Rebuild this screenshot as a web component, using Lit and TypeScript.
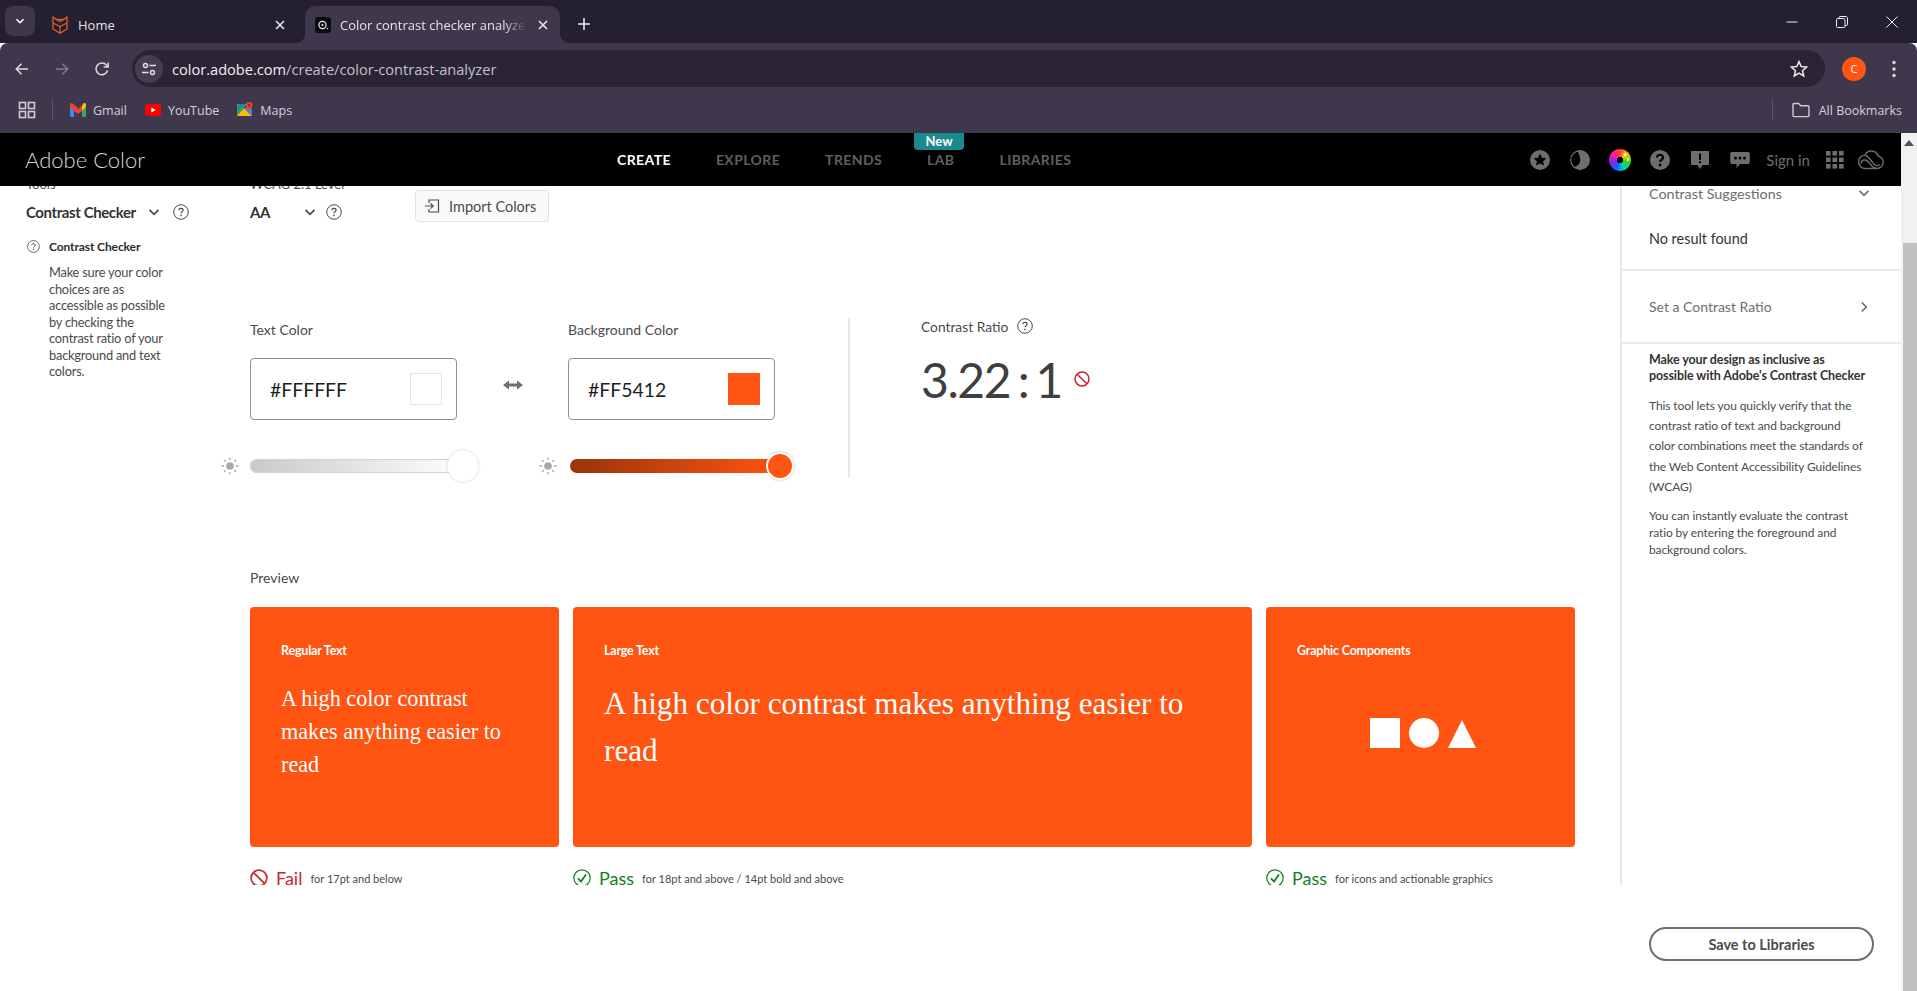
import {LitElement, css, html, svg} from 'lit';
import {customElement} from 'lit/decorators.js';

const helpIcon = (size = 16) => html`<svg class="help" width=${size} height=${size} viewBox="0 0 16 16">
  <circle cx="8" cy="8" r="7.3" fill="none" stroke="#4b4b4b" stroke-width="1"/>
  <path d="M5.9 6.2c0-1.2 1-1.9 2.1-1.9s2.1.7 2.1 1.8c0 1.6-2.1 1.6-2.1 3.2" fill="none" stroke="#4b4b4b" stroke-width="1.2"/>
  <circle cx="8" cy="11.4" r=".8" fill="#4b4b4b"/>
</svg>`;

const blockIcon = (size = 16) => html`<svg width=${size} height=${size} viewBox="0 0 16 16">
  <circle cx="8" cy="8" r="7" fill="none" stroke="#c9252d" stroke-width="1.5"/>
  <path d="M3.2 3.2l9.6 9.6" stroke="#c9252d" stroke-width="1.5"/>
</svg>`;

const checkIcon = (size = 18) => html`<svg width=${size} height=${size} viewBox="0 0 18 18">
  <circle cx="9" cy="9" r="8.2" fill="none" stroke="#128020" stroke-width="1.2"/>
  <path d="M5 9.4l3 3.2 5-7" fill="none" stroke="#128020" stroke-width="1.8"/>
</svg>`;

const chevronDown = (color = '#4b4b4b') => html`<svg width="12" height="12" viewBox="0 0 12 12">
  <path d="M1.5 3.8L6 8.3l4.5-4.5" fill="none" stroke=${color} stroke-width="1.7"/>
</svg>`;

const sunIcon = () => html`<svg width="18" height="18" viewBox="0 0 16 16">
  <circle cx="8" cy="8" r="3.4" fill="#a8a8a8"/>
  <path d="M8 .5v2.200M8 13.300v2.200M.5 8h2.200M13.300 8h2.200M2.700 2.700l1.500 1.500M11.800 11.800l1.500 1.500M2.700 13.300l1.500-1.500M11.800 4.200l1.500-1.500" stroke="#a8a8a8" stroke-width="1.200"/>
</svg>`;

const closeIcon = () => html`<svg width="16" height="16" viewBox="0 0 16 16">
  <path d="M4 4l8 8M12 4l-8 8" stroke="#e8e6ec" stroke-width="1.6"/>
</svg>`;

@customElement('app-root')
export class AppRoot extends LitElement {
  static styles = css`
    :host {
      display: block;
      width: 1917px;
      height: 991px;
      overflow: hidden;
      background: #fff;
      font-family: 'Lato', 'Open Sans', sans-serif;
      color: #2c2c2c;
    }
    svg {
      display: block;
      flex: none;
    }

    /* browser chrome */
    .tabstrip {
      height: 43px;
      display: flex;
      align-items: flex-end;
      background: #241f31;
      font-family: 'Open Sans', sans-serif;
      font-size: 13px;
      color: #e4e2e8;
    }
    .tab-menu {
      width: 30px;
      height: 30px;
      margin: 0 0 7px 5px;
      border-radius: 8px;
      background: #3f384c;
      display: flex;
      align-items: center;
      justify-content: center;
    }
    .tab {
      height: 37px;
      display: flex;
      align-items: center;
      box-sizing: border-box;
    }
    .tab.home {
      width: 250px;
      margin-left: 15px;
      padding: 0 12px 0 2px;
      gap: 10px;
    }
    .tab.active {
      width: 255px;
      margin-left: 5px;
      padding: 0 9px 0 10px;
      gap: 9px;
      background: #3f384c;
      border-radius: 10px 10px 0 0;
      position: relative;
    }
    .tab.active::before,
    .tab.active::after {
      content: '';
      position: absolute;
      bottom: 0;
      width: 10px;
      height: 10px;
    }
    .tab.active::before {
      left: -10px;
      background: radial-gradient(circle at 0 0, #241f31 10px, #3f384c 10.5px);
    }
    .tab.active::after {
      right: -10px;
      background: radial-gradient(circle at 100% 0, #241f31 10px, #3f384c 10.5px);
    }
    .tab-title {
      flex: 1;
      white-space: nowrap;
      overflow: hidden;
    }
    .tab.active .tab-title {
      -webkit-mask-image: linear-gradient(90deg, #000 88%, transparent);
      mask-image: linear-gradient(90deg, #000 88%, transparent);
    }
    .favicon {
      width: 16px;
      height: 16px;
      border-radius: 3px;
      background: #0b0b12;
    }
    .new-tab {
      margin: 0 0 11px 16px;
    }
    .window-controls {
      margin-left: auto;
      align-self: flex-start;
      display: flex;
    }
    .window-controls div {
      width: 50px;
      height: 43px;
      display: flex;
      align-items: center;
      justify-content: center;
    }

    .toolbar {
      height: 44px;
      box-sizing: border-box;
      padding-top: 7px;
      display: flex;
      align-items: center;
      background: #3f384c;
      border-radius: 8px 8px 0 0;
      padding-left: 2px;
    }
    .nav-btn {
      width: 40px;
      height: 37px;
      display: flex;
      align-items: center;
      justify-content: center;
    }
    .address {
      flex: 1;
      margin-left: 10px;
      height: 37px;
      border-radius: 19px;
      background: #2a2435;
      display: flex;
      align-items: center;
      padding: 0 16px 0 3px;
      font-family: 'Open Sans', sans-serif;
      font-size: 14.6px;
      color: #c4c0cb;
    }
    .site-info {
      width: 28px;
      height: 28px;
      border-radius: 50%;
      background: #453e52;
      display: flex;
      align-items: center;
      justify-content: center;
      margin-right: 9px;
    }
    .url b {
      font-weight: 400;
      color: #f1eff4;
    }
    .star {
      margin-left: auto;
    }
    .avatar {
      width: 24px;
      height: 24px;
      margin-left: 17px;
      border-radius: 50%;
      background: #ff5412;
      color: #fff;
      font-family: 'Open Sans', sans-serif;
      font-size: 11px;
      display: flex;
      align-items: center;
      justify-content: center;
    }
    .dots {
      margin: 0 15px 0 20px;
    }

    .bookmarks {
      height: 46px;
      display: flex;
      align-items: center;
      background: #3f384c;
      padding: 0 15px 0 17px;
      font-family: 'Open Sans', sans-serif;
      font-size: 12.5px;
      color: #d3d0d9;
    }
    .bm-sep {
      width: 1px;
      height: 20px;
      background: #5d566a;
    }
    .bm-sep.first {
      margin-left: 15px;
    }
    .bm-sep.last {
      margin-right: 10px;
    }
    .bm {
      display: flex;
      align-items: center;
      gap: 7px;
      margin-left: 18px;
    }
    .bm.first {
      margin-left: 17px;
    }
    .bm-all {
      margin-left: auto;
      display: flex;
      align-items: center;
      gap: 9px;
    }

    /* adobe page */
    .window {
      display: flex;
      height: 858px;
    }
    .page {
      width: 1901px;
      display: flex;
      flex-direction: column;
    }
    .scrollbar {
      width: 16px;
      background: #f1f1f1;
      display: flex;
      flex-direction: column;
    }
    .scroll-up {
      height: 110px;
      padding: 7px 0 0 3px;
      box-sizing: border-box;
    }
    .scroll-thumb {
      flex: 1;
      margin-left: 2px;
      background: #c1c1c1;
    }

    .nav {
      height: 53px;
      flex: none;
      background: #000;
      display: flex;
      align-items: center;
      position: relative;
      z-index: 1;
    }
    .brand {
      width: 592px;
      margin-left: 25px;
      font-size: 22px;
      font-weight: 300;
      color: #d8d8d8;
      flex: none;
    }
    .links {
      display: flex;
      gap: 45px;
      font-size: 14px;
      font-weight: 700;
      letter-spacing: 0.4px;
      color: #5f5f5f;
    }
    .links .on {
      color: #fff;
    }
    .lab {
      position: relative;
    }
    .badge {
      position: absolute;
      left: -13px;
      top: -18px;
      width: 50px;
      height: 17px;
      border-radius: 0 0 4px 4px;
      background: #1b8a8f;
      color: #fff;
      font-size: 13px;
      letter-spacing: 0;
      line-height: 16px;
      text-align: center;
    }
    .nav-right {
      margin-left: auto;
      display: flex;
      align-items: center;
      padding-right: 17px;
    }
    .nav-icon {
      width: 40px;
      display: flex;
      justify-content: center;
    }
    .wheel {
      width: 22px;
      height: 22px;
      border-radius: 50%;
      background: radial-gradient(circle, #000 0 3px, transparent 3.5px),
        radial-gradient(circle at 72% 24%, #fff 0 1.2px, transparent 1.6px),
        radial-gradient(circle at 86% 48%, #fff 0 1px, transparent 1.4px),
        conic-gradient(#ff3b30, #ffcc00, #34d800, #00d0c0, #1060ff, #9020e0, #ff20a0, #ff3b30);
    }
    .sign-in {
      margin-left: 6px;
      font-size: 15px;
      color: #6e6e6e;
    }
    .apps {
      margin-left: 16px;
    }
    .cc {
      margin-left: 14px;
    }

    .content {
      height: 699px;
      flex: none;
      overflow: hidden;
      display: grid;
      grid-template-columns: 250px 1370px 281px;
    }
    .small-label {
      height: 20px;
      line-height: 20px;
      font-size: 13px;
      margin-top: -12px;
      color: #4b4b4b;
    }
    .select {
      height: 24px;
      display: flex;
      align-items: center;
      margin-top: 6px;
      font-size: 15px;
      font-weight: 700;
      letter-spacing: -0.4px;
      color: #333;
      white-space: nowrap;
    }

    .sidebar {
      padding-left: 26px;
    }
    .sidebar .select-text {
      width: 122px;
    }
    .sidebar .help-gap {
      margin-left: 13px;
    }
    .tool-title {
      display: flex;
      align-items: center;
      gap: 9px;
      height: 18px;
      margin: 13px 0 0 1px;
      font-size: 12px;
      font-weight: 700;
      letter-spacing: -0.1px;
    }
    .tool-text {
      margin: 9px 0 0 23px;
      font-size: 12.8px;
      line-height: 16.5px;
      letter-spacing: -0.2px;
      white-space: nowrap;
      color: #4b4b4b;
    }

    .main-top {
      display: flex;
      height: 38px;
    }
    .wcag {
      width: 165px;
    }
    .wcag .select-text {
      width: 54px;
    }
    .wcag .help-gap {
      margin-left: 10px;
    }
    .import {
      width: 134px;
      height: 32px;
      margin-top: 4px;
      box-sizing: border-box;
      border: 1px solid #e1e1e1;
      border-radius: 4px;
      background: #fafafa;
      display: flex;
      align-items: center;
      gap: 9px;
      padding-left: 8px;
      font-size: 14.5px;
      color: #4b4b4b;
    }
    .colors {
      display: flex;
      margin-top: 96px;
    }
    .color-col {
      width: 207px;
      flex: none;
    }
    .field-label {
      height: 20px;
      line-height: 20px;
      font-size: 14px;
      color: #4b4b4b;
    }
    .input {
      height: 62px;
      margin-top: 18px;
      box-sizing: border-box;
      border: 1px solid #8e8e8e;
      border-radius: 4px;
      display: flex;
      align-items: center;
      justify-content: space-between;
      padding: 0 14px 0 19px;
      font-size: 19.4px;
      color: #1d1d1d;
    }
    .swatch {
      width: 32px;
      height: 32px;
      box-sizing: border-box;
      border: 1px solid #e4e4e4;
      background: #fff;
    }
    .swatch.orange {
      background: #ff5412;
      border-color: #ff5412;
    }
    .swap {
      width: 111px;
      flex: none;
      padding-top: 55px;
      display: flex;
      justify-content: center;
      align-items: flex-start;
    }
    .slider {
      height: 30px;
      margin: 31px 0 0 -29px;
      display: flex;
      align-items: center;
      gap: 11px;
    }
    .track {
      width: 215px;
      height: 14px;
      border-radius: 7px;
      position: relative;
      flex: none;
    }
    .track.gray {
      background: linear-gradient(90deg, #c9c9c9, #fff);
      box-shadow: inset 0 0 0 1px #d4d4d4;
    }
    .track.red {
      width: 212px;
      margin-left: 2px;
      background: linear-gradient(90deg, #9a3409, #ff5412);
    }
    .thumb {
      position: absolute;
      top: 50%;
      border-radius: 50%;
      transform: translate(-50%, -50%);
    }
    .track.gray .thumb {
      left: 213px;
      width: 31px;
      height: 31px;
      background: #fff;
      box-shadow: 0 0 3px rgba(0, 0, 0, 0.2);
    }
    .track.red .thumb {
      left: 210px;
      width: 24px;
      height: 24px;
      background: #ff5412;
      border: 2px solid #fff;
      box-shadow: 0 0 3px rgba(0, 0, 0, 0.25);
    }
    .divider {
      width: 2px;
      height: 159px;
      margin: -2px 0 0 73px;
      background: #e6e6e6;
      flex: none;
    }
    .ratio {
      margin: -4px 0 0 71px;
    }
    .ratio-label {
      height: 20px;
      display: flex;
      align-items: center;
      gap: 9px;
      font-size: 13.8px;
      color: #4b4b4b;
    }
    .ratio-value {
      height: 56px;
      margin-top: 15px;
      display: flex;
      align-items: center;
      gap: 12px;
      font-size: 48px;
      font-weight: 400;
      letter-spacing: -1.4px;
      word-spacing: -3.5px;
      color: #3f3f3f;
      white-space: nowrap;
    }

    .preview-label {
      height: 20px;
      line-height: 20px;
      margin-top: 87px;
      font-size: 14px;
      color: #4b4b4b;
    }
    .cards {
      display: grid;
      grid-template-columns: 309px 679px 309px;
      gap: 14px;
      width: 1325px;
    }
    .cards.top {
      margin-top: 19px;
    }
    .cards.status {
      margin-top: 19px;
    }
    .card {
      height: 240px;
      box-sizing: border-box;
      padding: 35px 31px 0;
      border-radius: 4px;
      background: #ff5412;
      color: #fff;
    }
    .card-label {
      height: 18px;
      line-height: 18px;
      font-size: 12.5px;
      font-weight: 700;
      letter-spacing: -0.2px;
    }
    .sample {
      font-family: 'Liberation Serif', serif;
    }
    .sample.regular {
      margin-top: 22px;
      font-size: 22.2px;
      line-height: 33px;
    }
    .sample.large {
      margin-top: 20px;
      font-size: 31.2px;
      line-height: 47px;
    }
    .shapes {
      margin-top: 58px;
      padding-left: 4px;
      display: flex;
      justify-content: center;
      align-items: flex-end;
      gap: 9px;
    }
    .shape-square {
      width: 30px;
      height: 30px;
      background: #fff;
    }
    .shape-circle {
      width: 30px;
      height: 30px;
      border-radius: 50%;
      background: #fff;
    }
    .result {
      height: 24px;
      display: flex;
      align-items: center;
      white-space: nowrap;
    }
    .result-word {
      margin: 0 8px 0 8px;
      font-size: 18px;
    }
    .result-word.fail {
      color: #c9252d;
    }
    .result-word.pass {
      color: #128020;
    }
    .result-note {
      font-size: 11px;
      color: #4b4b4b;
    }

    .panel {
      border-left: 2px solid #e8e8e8;
      font-size: 14px;
    }
    .panel-sect {
      padding: 0 31px 0 27px;
      box-sizing: border-box;
      border-bottom: 2px solid #ebebeb;
    }
    .panel-sect.first {
      margin-top: -5px;
      height: 90px;
    }
    .panel-head {
      height: 24px;
      display: flex;
      align-items: center;
      justify-content: space-between;
      font-size: 14.3px;
      color: #6e6e6e;
    }
    .no-result {
      height: 24px;
      line-height: 24px;
      margin-top: 22px;
      font-size: 14.4px;
      color: #333;
    }
    .panel-sect.second {
      height: 73px;
      display: flex;
      align-items: center;
      justify-content: space-between;
      font-size: 14px;
      color: #6e6e6e;
    }
    .panel-info {
      padding: 8px 20px 0 27px;
      white-space: nowrap;
    }
    .info-head {
      font-size: 12.5px;
      font-weight: 700;
      line-height: 16px;
      letter-spacing: -0.1px;
      color: #333;
    }
    .info-a {
      margin-top: 12px;
      font-size: 12px;
      letter-spacing: -0.1px;
      line-height: 20.2px;
      color: #4b4b4b;
    }
    .info-b {
      margin-top: 10px;
      font-size: 12px;
      letter-spacing: -0.1px;
      line-height: 17px;
      color: #4b4b4b;
    }
    .footer {
      flex: 1;
      display: flex;
      justify-content: flex-end;
      padding: 42px 27px 0 0;
    }
    .save {
      width: 225px;
      height: 34px;
      box-sizing: border-box;
      border: 2px solid #6e6e6e;
      border-radius: 17px;
      display: flex;
      align-items: center;
      justify-content: center;
      font-size: 14.5px;
      font-weight: 700;
      color: #4b4b4b;
    }
  `;

  renderChrome() {
    return html`
      <div class="tabstrip">
        <div class="tab-menu">
          <svg width="12" height="12" viewBox="0 0 12 12"><path d="M2.5 4.2L6 7.7l3.5-3.5" fill="none" stroke="#fff" stroke-width="1.6"/></svg>
        </div>
        <div class="tab home">
          <svg width="16" height="18" viewBox="0 0 16 18" fill="none" stroke="#d9622b" stroke-width="1.3">
            <path d="M1 1l3.5 2.5h7L15 1v12l-7 4.3L1 13z"/>
            <path d="M1 7l7 3.6L15 7M8 10.6v6.4M4.5 3.5L8 5.5l3.5-2"/>
          </svg>
          <span class="tab-title">Home</span>
          ${closeIcon()}
        </div>
        <div class="tab active">
          <div class="favicon">
            <svg width="16" height="16" viewBox="0 0 16 16" fill="none" stroke="#e8e8e8">
              <circle cx="7.5" cy="8" r="3.6" stroke-width="1.2"/>
              <circle cx="7.5" cy="8" r="1.1" fill="#e8e8e8" stroke="none"/>
              <circle cx="12.5" cy="11.5" r=".8" fill="#e8e8e8" stroke="none"/>
            </svg>
          </div>
          <span class="tab-title">Color contrast checker analyzer</span>
          ${closeIcon()}
        </div>
        <div class="new-tab">
          <svg width="16" height="16" viewBox="0 0 16 16"><path d="M8 2v12M2 8h12" stroke="#e8e6ec" stroke-width="1.6"/></svg>
        </div>
        <div class="window-controls">
          <div><svg width="14" height="14" viewBox="0 0 14 14"><path d="M1.5 7h11" stroke="#eee" stroke-width="1"/></svg></div>
          <div><svg width="14" height="14" viewBox="0 0 14 14" fill="none" stroke="#eee"><rect x="1.5" y="3.5" width="8.5" height="9" rx="1.2"/><path d="M4 3.5V2.6c0-.6.5-1.1 1.1-1.1h5.8c.9 0 1.6.7 1.6 1.6v6.4c0 .6-.4 1-1 1H10"/></svg></div>
          <div><svg width="14" height="14" viewBox="0 0 14 14"><path d="M1.5 1.5l11 11M12.5 1.5l-11 11" stroke="#eee" stroke-width="1"/></svg></div>
        </div>
      </div>
      <div class="toolbar">
        <div class="nav-btn"><svg width="18" height="18" viewBox="0 0 18 18" fill="none" stroke="#dcd9e1" stroke-width="1.6"><path d="M15 9H3.5M8.5 3.8L3.3 9l5.2 5.2"/></svg></div>
        <div class="nav-btn"><svg width="18" height="18" viewBox="0 0 18 18" fill="none" stroke="#7f798a" stroke-width="1.6"><path d="M3 9h11.5M9.5 3.8L14.7 9l-5.2 5.2"/></svg></div>
        <div class="nav-btn"><svg width="18" height="18" viewBox="0 0 18 18" fill="none" stroke="#dcd9e1" stroke-width="1.6"><path d="M14.6 10.5A5.9 5.9 0 1 1 13.4 5L15 6.6"/><path d="M15.2 2.4v4.6h-4.6" stroke-width="1.5"/></svg></div>
        <div class="address">
          <div class="site-info">
            <svg width="16" height="16" viewBox="0 0 16 16" fill="none" stroke="#e4e2e8" stroke-width="1.4">
              <circle cx="4.5" cy="4.5" r="2"/><path d="M8.5 4.5H15M1 11.5h6.5"/><circle cx="11.5" cy="11.5" r="2"/>
            </svg>
          </div>
          <span class="url"><b>color.adobe.com</b>/create/color-contrast-analyzer</span>
          <svg class="star" width="20" height="20" viewBox="0 0 20 20"><path d="M10 2.6l2.2 5 5.4.5-4.1 3.6 1.2 5.3L10 14.2l-4.7 2.8 1.2-5.3-4.1-3.6 5.4-.5z" fill="none" stroke="#eceaf0" stroke-width="1.5"/></svg>
        </div>
        <div class="avatar">C</div>
        <svg class="dots" width="16" height="18" viewBox="0 0 16 18" fill="#dcd9e1"><circle cx="8" cy="2.5" r="1.7"/><circle cx="8" cy="9" r="1.7"/><circle cx="8" cy="15.5" r="1.7"/></svg>
      </div>
      <div class="bookmarks">
        <svg width="20" height="20" viewBox="0 0 20 20" fill="none" stroke="#cfccd6" stroke-width="1.6"><rect x="2.5" y="2.5" width="6" height="6"/><rect x="11.5" y="2.5" width="6" height="6"/><rect x="2.5" y="11.5" width="6" height="6"/><rect x="11.5" y="11.5" width="6" height="6"/></svg>
        <div class="bm-sep first"></div>
        <div class="bm first">
          <svg width="16" height="14" viewBox="0 0 16 14">
            <path d="M0 3v9.5c0 .8.6 1.5 1.5 1.5H4V6z" fill="#4285f4"/>
            <path d="M12 6v8h2.5c.9 0 1.5-.7 1.5-1.5V3z" fill="#34a853"/>
            <path d="M0 1.7C0 .3 1.6-.4 2.6.5L8 5 4 8 0 4z" fill="#ea4335"/>
            <path d="M4 2.7L8 6l4-3.3V8L8 11 4 8z" fill="#ea4335"/>
            <path d="M16 1.7C16 .3 14.4-.4 13.4.5L12 2.7V8l4-4z" fill="#fbbc04"/>
          </svg>
          Gmail
        </div>
        <div class="bm">
          <svg width="16" height="12" viewBox="0 0 16 12"><rect width="16" height="12" rx="3" fill="#f00"/><path d="M6.4 3.4v5.2L10.8 6z" fill="#fff"/></svg>
          YouTube
        </div>
        <div class="bm">
          <svg width="16" height="16" viewBox="0 0 16 16">
            <path d="M0 2h10L0 14z" fill="#34a853"/>
            <path d="M0 14L7 6l8 8z" fill="#fbbc04"/>
            <path d="M10 2H3L0 6v3z" fill="#1a73e8" opacity=".75"/>
            <path d="M7 6l8 8V7l-3-2z" fill="#4285f4"/>
            <path d="M12.2 0a3.3 3.3 0 0 0-3.3 3.3c0 2.4 3.3 5.7 3.3 5.7s3.3-3.3 3.3-5.7A3.3 3.3 0 0 0 12.2 0z" fill="#ea4335"/>
            <circle cx="12.2" cy="3.3" r="1.2" fill="#8c1d18"/>
          </svg>
          Maps
        </div>
        <div class="bm-all">
          <div class="bm-sep last"></div>
          <svg width="18" height="16" viewBox="0 0 18 16"><path d="M1 13.5V2.6c0-.6.5-1.1 1.1-1.1h4.6l2 2.2h7.2c.6 0 1.1.5 1.1 1.1v8.7c0 .6-.5 1.1-1.1 1.1H2.1c-.6 0-1.1-.5-1.1-1.1z" fill="none" stroke="#cfccd6" stroke-width="1.4"/></svg>
          All Bookmarks
        </div>
      </div>
    `;
  }

  renderNav() {
    return html`
      <div class="nav">
        <div class="brand">Adobe Color</div>
        <div class="links">
          <span class="on">CREATE</span>
          <span>EXPLORE</span>
          <span>TRENDS</span>
          <span class="lab"><span class="badge">New</span>LAB</span>
          <span>LIBRARIES</span>
        </div>
        <div class="nav-right">
          <div class="nav-icon">
            <svg width="20" height="20" viewBox="0 0 20 20"><circle cx="10" cy="10" r="10" fill="#6e6e6e"/><path d="M10 3.6l1.9 4.1 4.5.5-3.3 3 .9 4.4-4-2.2-4 2.2.9-4.4-3.3-3 4.5-.5z" fill="#000"/></svg>
          </div>
          <div class="nav-icon">
            <svg width="20" height="20" viewBox="0 0 20 20"><circle cx="10" cy="10" r="9.3" fill="none" stroke="#6e6e6e" stroke-width="1.2"/><path d="M7.5.9A9.5 9.5 0 1 1 3.4 16.8C7.5 17 10.6 13.5 10.2 9.4 9.9 6 8.6 3 7.5.9z" fill="#6e6e6e"/></svg>
          </div>
          <div class="nav-icon"><div class="wheel"></div></div>
          <div class="nav-icon">
            <svg width="20" height="20" viewBox="0 0 20 20"><circle cx="10" cy="10" r="10" fill="#6e6e6e"/><path d="M7 7.6C7 5.8 8.3 4.8 10 4.8s3.1 1 3.1 2.7c0 2.3-3 2.4-3 4.4" fill="none" stroke="#000" stroke-width="2.1"/><circle cx="10.1" cy="15" r="1.4" fill="#000"/></svg>
          </div>
          <div class="nav-icon">
            <svg width="20" height="20" viewBox="0 0 20 20"><path d="M1.5 1h17c.3 0 .5.2.5.5v13c0 .3-.2.5-.5.5h-6L10 19l-2.5-4h-6c-.3 0-.5-.2-.5-.5v-13c0-.3.2-.5.5-.5z" fill="#6e6e6e"/><path d="M9 3.5h2v6.5H9zM9 11.3h2v2H9z" fill="#000"/></svg>
          </div>
          <div class="nav-icon">
            <svg width="20" height="20" viewBox="0 0 20 20"><path d="M2 2h16c1 0 1.8.8 1.8 1.8v8.4c0 1-.8 1.8-1.8 1.8h-8l-3.5 4v-4H2c-1 0-1.8-.8-1.8-1.8V3.800C.2 2.800 1 2 2 2z" fill="#6e6e6e"/><circle cx="5.500" cy="8" r="1.500" fill="#000"/><circle cx="10" cy="8" r="1.500" fill="#000"/><circle cx="14.500" cy="8" r="1.500" fill="#000"/></svg>
          </div>
          <div class="sign-in">Sign in</div>
          <svg class="apps" width="18" height="18" viewBox="0 0 18 18" fill="#6e6e6e">
            ${[0, 6.5, 13].flatMap((y) => [0, 6.5, 13].map((x) => svg`<rect x=${x} y=${y} width="4.600" height="4.600"/>`))}
          </svg>
          <svg class="cc" width="26" height="20" viewBox="0 0 26 20" fill="none" stroke="#6e6e6e" stroke-width="1.400">
            <path d="M7.500 18.500a6.700 6.700 0 0 1-.6-13.400A7 7 0 0 1 20 6a6.300 6.300 0 0 1-1 12.500z"/>
            <path d="M7 5.200c4 .8 6 6 9.500 9.500 1.200 1.200 4 1.300 5.200-.4M19 18.500c-3 0-5-2-6.500-4s-3-4.500-6-4.500c-2 0-3.500 1.700-3.500 3.800"/>
          </svg>
        </div>
      </div>
    `;
  }

  renderColors() {
    return html`
      <div class="colors">
        <div class="color-col">
          <div class="field-label">Text Color</div>
          <div class="input">#FFFFFF<div class="swatch"></div></div>
          <div class="slider">${sunIcon()}<div class="track gray"><div class="thumb"></div></div></div>
        </div>
        <div class="swap">
          <svg width="20" height="20" viewBox="0 0 20 20" fill="#6e6e6e"><path d="M0 10l6-4.500v3h8v-3l6 4.500-6 4.500v-3H6v3z"/></svg>
        </div>
        <div class="color-col">
          <div class="field-label">Background Color</div>
          <div class="input">#FF5412<div class="swatch orange"></div></div>
          <div class="slider">${sunIcon()}<div class="track red"><div class="thumb"></div></div></div>
        </div>
        <div class="divider"></div>
        <div class="ratio">
          <div class="ratio-label">Contrast Ratio ${helpIcon()}</div>
          <div class="ratio-value">3.22 : 1 ${blockIcon()}</div>
        </div>
      </div>
    `;
  }

  renderPreview() {
    return html`
      <div class="preview-label">Preview</div>
      <div class="cards top">
        <div class="card">
          <div class="card-label">Regular Text</div>
          <div class="sample regular">A high color contrast makes anything easier to read</div>
        </div>
        <div class="card">
          <div class="card-label">Large Text</div>
          <div class="sample large">A high color contrast makes anything easier to read</div>
        </div>
        <div class="card">
          <div class="card-label">Graphic Components</div>
          <div class="shapes">
            <div class="shape-square"></div>
            <div class="shape-circle"></div>
            <svg width="28" height="28" viewBox="0 0 28 28"><path d="M14 0l14 28H0z" fill="#fff"/></svg>
          </div>
        </div>
      </div>
      <div class="cards status">
        <div class="result">${blockIcon(18)}<span class="result-word fail">Fail</span><span class="result-note">for 17pt and below</span></div>
        <div class="result">${checkIcon()}<span class="result-word pass">Pass</span><span class="result-note">for 18pt and above / 14pt bold and above</span></div>
        <div class="result">${checkIcon()}<span class="result-word pass">Pass</span><span class="result-note">for icons and actionable graphics</span></div>
      </div>
    `;
  }

  renderPanel() {
    return html`
      <div class="panel">
        <div class="panel-sect first">
          <div class="panel-head">Contrast Suggestions ${chevronDown('#6e6e6e')}</div>
          <div class="no-result">No result found</div>
        </div>
        <div class="panel-sect second">
          Set a Contrast Ratio
          <svg width="12" height="12" viewBox="0 0 12 12"><path d="M3.800 1.500L8.300 6l-4.500 4.500" fill="none" stroke="#6e6e6e" stroke-width="1.700"/></svg>
        </div>
        <div class="panel-info">
          <div class="info-head">Make your design as inclusive as<br />possible with Adobe's Contrast Checker</div>
          <div class="info-a">This tool lets you quickly verify that the<br />contrast ratio of text and background<br />color combinations meet the standards of<br />the Web Content Accessibility Guidelines<br />(WCAG)</div>
          <div class="info-b">You can instantly evaluate the contrast<br />ratio by entering the foreground and<br />background colors.</div>
        </div>
      </div>
    `;
  }

  render() {
    return html`
      ${this.renderChrome()}
      <div class="window">
        <div class="page">
          ${this.renderNav()}
          <div class="content">
            <div class="sidebar">
              <div class="small-label">Tools</div>
              <div class="select">
                <span class="select-text">Contrast Checker</span>${chevronDown()}<span class="help-gap">${helpIcon()}</span>
              </div>
              <div class="tool-title">${helpIcon(13)}Contrast Checker</div>
              <div class="tool-text">Make sure your color<br />choices are as<br />accessible as possible<br />by checking the<br />contrast ratio of your<br />background and text<br />colors.</div>
            </div>
            <div class="main">
              <div class="main-top">
                <div class="wcag">
                  <div class="small-label">WCAG 2.1 Level</div>
                  <div class="select">
                    <span class="select-text">AA</span>${chevronDown()}<span class="help-gap">${helpIcon()}</span>
                  </div>
                </div>
                <div class="import">
                  <svg width="16" height="16" viewBox="0 0 16 16" fill="none" stroke="#4b4b4b" stroke-width="1.200"><path d="M5 5V2h9.500v12H5v-3M1 8h8M6.500 5.300L9.200 8l-2.700 2.700"/></svg>
                  Import Colors
                </div>
              </div>
              ${this.renderColors()}
              ${this.renderPreview()}
            </div>
            ${this.renderPanel()}
          </div>
          <div class="footer"><div class="save">Save to Libraries</div></div>
        </div>
        <div class="scrollbar">
          <div class="scroll-up">
            <svg width="10" height="6" viewBox="0 0 10 6"><path d="M5 0l5 6H0z" fill="#505050"/></svg>
          </div>
          <div class="scroll-thumb"></div>
        </div>
      </div>
    `;
  }
}
